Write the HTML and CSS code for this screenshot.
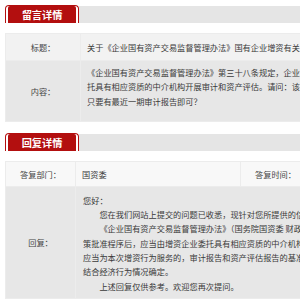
FILE: index.html
```html
<!DOCTYPE html>
<html lang="zh-CN">
<head>
    <meta charset="UTF-8">
    <meta name="viewport" content="width=device-width, initial-scale=1.0">
    <title>留言详情</title>
    <link rel="stylesheet" href="styles.css">
</head>
<body>
    <div class="detail">
        <div class="section-head">
            <div class="tab"><span>留言详情</span></div>
            <div class="bar"></div>
        </div>

        <table class="info-table question-table">
            <colgroup>
                <col class="col-label-wide">
                <col>
            </colgroup>
            <tr class="row-light">
                <td class="label">标题：</td>
                <td class="value">关于《企业国有资产交易监督管理办法》国有企业增资有关问题的咨询</td>
            </tr>
            <tr class="row-dark">
                <td class="label">内容：</td>
                <td class="value question-text">《企业国有资产交易监督管理办法》第三十八条规定，企业增资在完成决策批准程序后，应当由增资企业委<br>托具有相应资质的中介机构开展审计和资产评估。请问：该审计报告和资产评估报告是否必须为本次增资出具，还是<br>只要有最近一期审计报告即可？</td>
            </tr>
        </table>

        <div class="section-head">
            <div class="tab"><span>回复详情</span></div>
            <div class="bar"></div>
        </div>

        <table class="info-table reply-table">
            <colgroup>
                <col class="col-label">
                <col class="col-value">
                <col class="col-label">
                <col>
            </colgroup>
            <tr class="row-white">
                <td class="label">答复部门：</td>
                <td class="value">国资委</td>
                <td class="label">答复时间：</td>
                <td class="value">2019-05-21</td>
            </tr>
            <tr class="row-dark">
                <td class="label">回复：</td>
                <td class="value reply-text" colspan="3">
                    <p>您好：</p>
                    <p class="indent">您在我们网站上提交的问题已收悉，现针对您所提供的信息答复如下：</p>
                    <p class="indent">《企业国有资产交易监督管理办法》（国务院国资委 财政部令第32号）第三十八条规定，企业增资在完成决<br>策批准程序后，应当由增资企业委托具有相应资质的中介机构开展审计和资产评估。审计报告和资产评估报告<br>应当为本次增资行为服务的，审计报告和资产评估报告的基准日由企业根据相关规定并<br>结合经济行为情况确定。</p>
                    <p class="indent">上述回复仅供参考。欢迎您再次提问。</p>
                </td>
            </tr>
        </table>
    </div>
</body>
</html>
```

FILE: styles.css
```css
* {
    margin: 0;
    padding: 0;
    box-sizing: border-box;
}

html,
body {
    overflow: hidden;
}

body {
    background-color: #fff;
    font-family: "Noto Sans CJK SC", "Liberation Sans", sans-serif;
    font-size: 8.2px;
    line-height: 14.3px;
    color: #3a3a3a;
    padding: 5px 0 0 5px;
}

.detail {
    width: 620px;
}

/* section title with the red tab */
.section-head {
    display: flex;
    align-items: flex-end;
    height: 18px;
}

.tab {
    width: 74px;
    height: 18px;
    padding: 0 2px;
    background-color: #fff;
    border: 1px solid #b30f0f;
    border-bottom: none;
    border-radius: 4px 4px 0 0;
}

.tab span {
    display: block;
    height: 17px;
    background-color: #b30f0f;
    border-radius: 2px 2px 0 0;
    color: #fff;
    font-size: 10.2px;
    font-weight: bold;
    line-height: 17px;
    text-align: center;
}

.bar {
    flex: 1;
    height: 17px;
    background-color: #e5e5e5;
}

/* detail tables */
.info-table {
    width: 100%;
    table-layout: fixed;
    border-collapse: collapse;
    border: 1px solid #dedede;
    margin-top: 10px;
    margin-bottom: 11px;
}

.info-table td {
    border: 1px solid #ececec;
    padding: 0 6px;
    vertical-align: middle;
}

.col-label-wide {
    width: 75px;
}

.col-label {
    width: 70px;
}

.col-value {
    width: 165px;
}

.label {
    text-align: center;
    color: #444;
}

.value {
    white-space: nowrap;
    overflow: hidden;
}

.row-light td {
    height: 27px;
    background-color: #f2f2f2;
}

.row-white td {
    height: 25px;
    background-color: #f8f8f8;
}

.row-dark td {
    background-color: #e7e7e7;
}

.info-table .question-text {
    padding: 4px 6px 13px;
}

.info-table .reply-text {
    padding: 6px 6px 5px 7px;
}

.indent {
    text-indent: 2em;
}
```
